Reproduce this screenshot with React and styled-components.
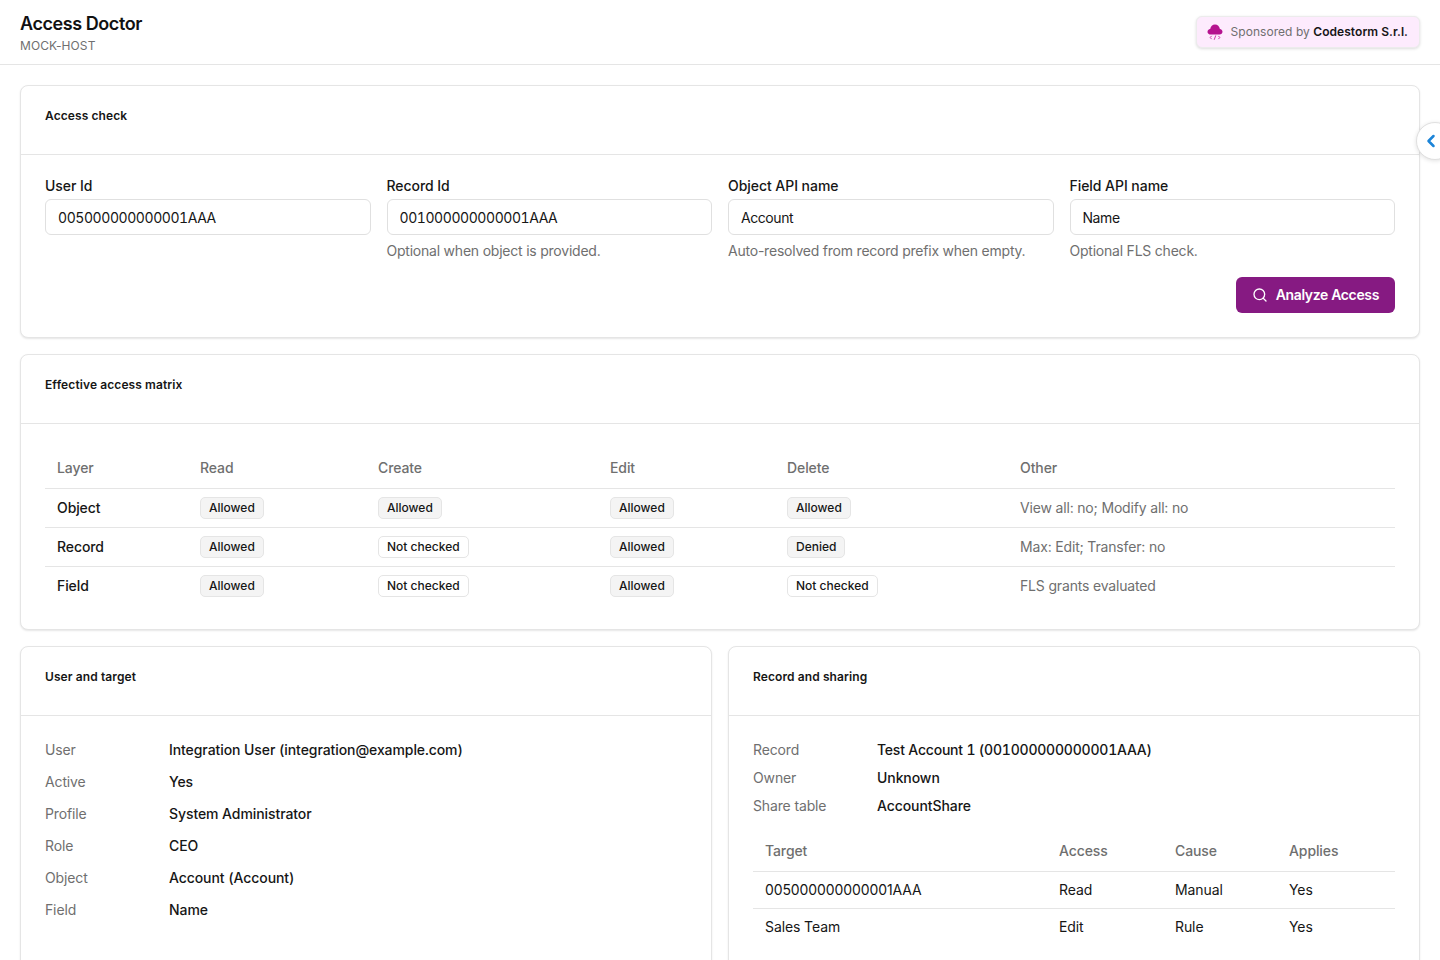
import React from "react";
import styled, { createGlobalStyle } from "styled-components";
import { Search, ChevronLeft } from "lucide-react";

const GlobalStyle = createGlobalStyle`
    * { box-sizing: border-box; }
    html, body {
        margin: 0;
        background: #fff;
        color: #161616;
        font-family: Inter, "Liberation Sans", sans-serif;
        font-size: 14px;
        overflow-x: hidden;
    }
    ::-webkit-scrollbar { display: none; }
`

const Topbar = styled.header`
    height: 65px;
    padding: 0 20px;
    display: flex;
    align-items: center;
    justify-content: space-between;
    border-bottom: 1px solid #e5e5e5;
`
const Brand = styled.div`
    margin-top: 2px;
    display: flex;
    flex-direction: column;
    gap: 2px;
`
const AppName = styled.div`
    font-size: 18px;
    line-height: 24px;
    font-weight: 600;
    letter-spacing: -0.43px;
    color: #111;
`
const HostName = styled.div`
    font-size: 12px;
    line-height: 16px;
    letter-spacing: 0.1px;
    color: #6f6f6f;
`
const Sponsor = styled.div`
    height: 32px;
    padding: 0 11px 0 10px;
    display: flex;
    align-items: center;
    gap: 8px;
    background: #fdebfd;
    border: 1px solid #ececec;
    border-radius: 6px;
    box-shadow: 0 1px 3px rgba(0, 0, 0, 0.14);
    font-size: 12px;
    color: #6f6f6f;
    b { font-weight: 600; color: #161616; }
`
const SponsorText = styled.span`
    padding-bottom: 2px;
    letter-spacing: 0.05px;
`
const Toggle = styled.button`
    position: absolute;
    top: 122px;
    left: 1416px;
    width: 38px;
    height: 38px;
    padding: 0 0 0 4px;
    display: flex;
    align-items: center;
    border: 1px solid #e0e0e0;
    border-radius: 50%;
    background: #fff;
    color: #1b84d8;
    box-shadow: 0 1px 4px rgba(0, 0, 0, 0.12);
`
const Page = styled.main`
    padding: 20px 20px 24px;
    display: flex;
    flex-direction: column;
    gap: 16px;
`
const Columns = styled.div`
    display: grid;
    grid-template-columns: 1fr 1fr;
    gap: 16px;
`
const Card = styled.section`
    background: #fff;
    border: 1px solid #e5e5e5;
    border-radius: 8px;
    box-shadow: 0 1px 2px rgba(0, 0, 0, 0.1);
`
const CardHeader = styled.h2`
    margin: 0;
    height: 69px;
    padding: 0 24px 9px;
    display: flex;
    align-items: center;
    border-bottom: 1px solid #e5e5e5;
    font-size: 12px;
    font-weight: 600;
    letter-spacing: 0.1px;
    color: #161616;
`
const CardBody = styled.div`
    padding: 24px;
`
const FieldGrid = styled.div`
    display: grid;
    grid-template-columns: repeat(4, 1fr);
    gap: 16px;
`
const Field = styled.label`
    display: flex;
    flex-direction: column;
`
const FieldLabel = styled.span`
    font-size: 14px;
    line-height: 14px;
    margin-bottom: 6px;
    font-weight: 500;
    letter-spacing: -0.05px;
    color: #161616;
`
const Input = styled.input`
    height: 36px;
    padding: 0 12px;
    border: 1px solid #e0e0e0;
    border-radius: 6px;
    background: #fff;
    font: inherit;
    font-size: 14px;
    font-variant-numeric: tabular-nums;
    letter-spacing: -0.43px;
    color: #161616;
`
const Hint = styled.span`
    margin-top: 6px;
    font-size: 14px;
    line-height: 20px;
    letter-spacing: -0.22px;
    color: #6f6f6f;
`
const Actions = styled.div`
    margin-top: 16px;
    display: flex;
    justify-content: flex-end;
`
const PrimaryButton = styled.button`
    height: 36px;
    padding: 0 16px;
    display: flex;
    align-items: center;
    gap: 8px;
    border: none;
    border-radius: 6px;
    background: #861a82;
    color: #fff;
    font: inherit;
    font-size: 14px;
    font-weight: 600;
    letter-spacing: -0.35px;
`
const ButtonLabel = styled.span`
    padding-bottom: 1px;
`
const Table = styled.table`
    width: 100%;
    border-collapse: collapse;
    table-layout: fixed;
`
const Th = styled.th`
    height: 40px;
    padding: 0 12px;
    text-align: left;
    font-size: 14px;
    font-weight: 500;
    letter-spacing: -0.1px;
    color: #6f6f6f;
    border-bottom: 1px solid #e5e5e5;
`
const Td = styled.td`
    height: ${(p) => p.$height}px;
    padding: 0 12px;
    font-size: 14px;
    font-weight: ${(p) => (p.$strong ? 500 : 400)};
    letter-spacing: ${(p) => (p.$muted ? "-0.17px" : "-0.1px")};
    color: ${(p) => (p.$muted ? "#6f6f6f" : "#161616")};
    border-bottom: ${(p) => (p.$last ? "none" : "1px solid #e5e5e5")};
`
const Badge = styled.span`
    display: inline-flex;
    align-items: center;
    height: 22px;
    padding: 0 8px;
    border: 1px solid #e5e5e5;
    border-radius: 5px;
    background: ${(p) => (p.$plain ? "#fff" : "#f4f4f4")};
    font-size: 12px;
    font-weight: 500;
    letter-spacing: 0;
    color: #161616;
    vertical-align: middle;
`
const InfoList = styled.div`
    display: flex;
    flex-direction: column;
    gap: ${(p) => p.$gap}px;
    margin-bottom: ${(p) => p.$after || 0}px;
`
const InfoRow = styled.div`
    display: grid;
    grid-template-columns: 124px 1fr;
    font-size: 14px;
    line-height: 20px;
`
const InfoKey = styled.span`
    letter-spacing: -0.14px;
    color: #6f6f6f;
`
const InfoValue = styled.span`
    font-weight: 500;
    font-variant-numeric: tabular-nums;
    letter-spacing: ${(p) => (p.$tight ? "-0.21px" : "-0.08px")};
    color: #161616;
`

// cloud with a code tag under it, sponsor logo
const CloudLogo = () => (
    <svg width="16" height="16" viewBox="0 0 16 16" fill="#b5138f">
        <path d="M4 10.5h8.5c1.7 0 3-1.1 3-2.7 0-1.4-1.1-2.5-2.6-2.7C12.5 2.6 10.6.5 8 .5 5.5.5 3.6 2.5 3.2 5 1.6 5.2.5 6.4.5 7.9c0 1.5 1.4 2.6 3.5 2.6z" />
        <path d="M4.6 11.9L3.2 13.5l1.4 1.6M11.4 11.9l1.4 1.6-1.4 1.6M8.8 11.4l-1.6 4.4" fill="none" stroke="#c9259f" strokeWidth="0.9" />
    </svg>
);

const matrix = [
    { layer: "Object", cells: ["Allowed", "Allowed", "Allowed", "Allowed"], other: "View all: no; Modify all: no" },
    { layer: "Record", cells: ["Allowed", "Not checked", "Allowed", "Denied"], other: "Max: Edit; Transfer: no" },
    { layer: "Field", cells: ["Allowed", "Not checked", "Allowed", "Not checked"], other: "FLS grants evaluated" },
];
const matrixCols = [143, 178, 232, 177, 233, 387];
const fields = [
    { label: "User Id", value: "005000000000001AAA" },
    { label: "Record Id", value: "001000000000001AAA", hint: "Optional when object is provided." },
    { label: "Object API name", value: "Account", hint: "Auto-resolved from record prefix when empty." },
    { label: "Field API name", value: "Name", hint: "Optional FLS check." },
];
const userInfo = [
    ["User", "Integration User (integration@example.com)"],
    ["Active", "Yes"],
    ["Profile", "System Administrator"],
    ["Role", "CEO"],
    ["Object", "Account (Account)"],
    ["Field", "Name"],
];
const recordInfo = [
    ["Record", "Test Account 1 (001000000000001AAA)"],
    ["Owner", "Unknown"],
    ["Share table", "AccountShare"],
];
const shares = [
    ["005000000000001AAA", "Read", "Manual", "Yes"],
    ["Sales Team", "Edit", "Rule", "Yes"],
];
const shareCols = [294, 116, 114, 118];

const App = () => {
    return (
        <>
            <GlobalStyle />
            <Topbar>
                <Brand>
                    <AppName>Access Doctor</AppName>
                    <HostName>MOCK-HOST</HostName>
                </Brand>
                <Sponsor>
                    <CloudLogo />
                    <SponsorText>Sponsored by <b>Codestorm S.r.l.</b></SponsorText>
                </Sponsor>
            </Topbar>
            <Toggle aria-label="Toggle panel"><ChevronLeft size={20} strokeWidth={3} /></Toggle>
            <Page>
                <Card>
                    <CardHeader>Access check</CardHeader>
                    <CardBody>
                        <FieldGrid>
                            {fields.map((f) => (
                                <Field key={f.label}>
                                    <FieldLabel>{f.label}</FieldLabel>
                                    <Input defaultValue={f.value} />
                                    {f.hint && <Hint>{f.hint}</Hint>}
                                </Field>
                            ))}
                        </FieldGrid>
                        <Actions>
                            <PrimaryButton>
                                <Search size={16} />
                                <ButtonLabel>Analyze Access</ButtonLabel>
                            </PrimaryButton>
                        </Actions>
                    </CardBody>
                </Card>
                <Card>
                    <CardHeader>Effective access matrix</CardHeader>
                    <CardBody>
                        <Table>
                            <colgroup>
                                {matrixCols.map((w, i) => <col key={i} style={{ width: w }} />)}
                            </colgroup>
                            <thead>
                                <tr>
                                    {["Layer", "Read", "Create", "Edit", "Delete", "Other"].map((h) => <Th key={h}>{h}</Th>)}
                                </tr>
                            </thead>
                            <tbody>
                                {matrix.map((row, r) => (
                                    <tr key={row.layer}>
                                        <Td $height={39} $strong $last={r === 2}>{row.layer}</Td>
                                        {row.cells.map((c, i) => (
                                            <Td key={i} $height={39} $last={r === 2}>
                                                <Badge $plain={c === "Not checked"}>{c}</Badge>
                                            </Td>
                                        ))}
                                        <Td $height={39} $muted $last={r === 2}>{row.other}</Td>
                                    </tr>
                                ))}
                            </tbody>
                        </Table>
                    </CardBody>
                </Card>
                <Columns>
                    <Card>
                        <CardHeader>User and target</CardHeader>
                        <CardBody>
                            <InfoList $gap={12}>
                                {userInfo.map(([k, v]) => (
                                    <InfoRow key={k}>
                                        <InfoKey>{k}</InfoKey>
                                        <InfoValue>{v}</InfoValue>
                                    </InfoRow>
                                ))}
                            </InfoList>
                        </CardBody>
                    </Card>
                    <Card>
                        <CardHeader>Record and sharing</CardHeader>
                        <CardBody>
                            <InfoList $gap={8} $after={15}>
                                {recordInfo.map(([k, v]) => (
                                    <InfoRow key={k}>
                                        <InfoKey>{k}</InfoKey>
                                        <InfoValue $tight={k === "Record"}>{v}</InfoValue>
                                    </InfoRow>
                                ))}
                            </InfoList>
                            <Table>
                                <colgroup>
                                    {shareCols.map((w, i) => <col key={i} style={{ width: w }} />)}
                                </colgroup>
                                <thead>
                                    <tr>
                                        {["Target", "Access", "Cause", "Applies"].map((h) => <Th key={h}>{h}</Th>)}
                                    </tr>
                                </thead>
                                <tbody>
                                    {shares.map((row, r) => (
                                        <tr key={row[0]}>
                                            {row.map((c, i) => <Td key={i} $height={37} $last={r === 1}>{c}</Td>)}
                                        </tr>
                                    ))}
                                </tbody>
                            </Table>
                        </CardBody>
                    </Card>
                </Columns>
            </Page>
        </>
    );
};

export default App;
